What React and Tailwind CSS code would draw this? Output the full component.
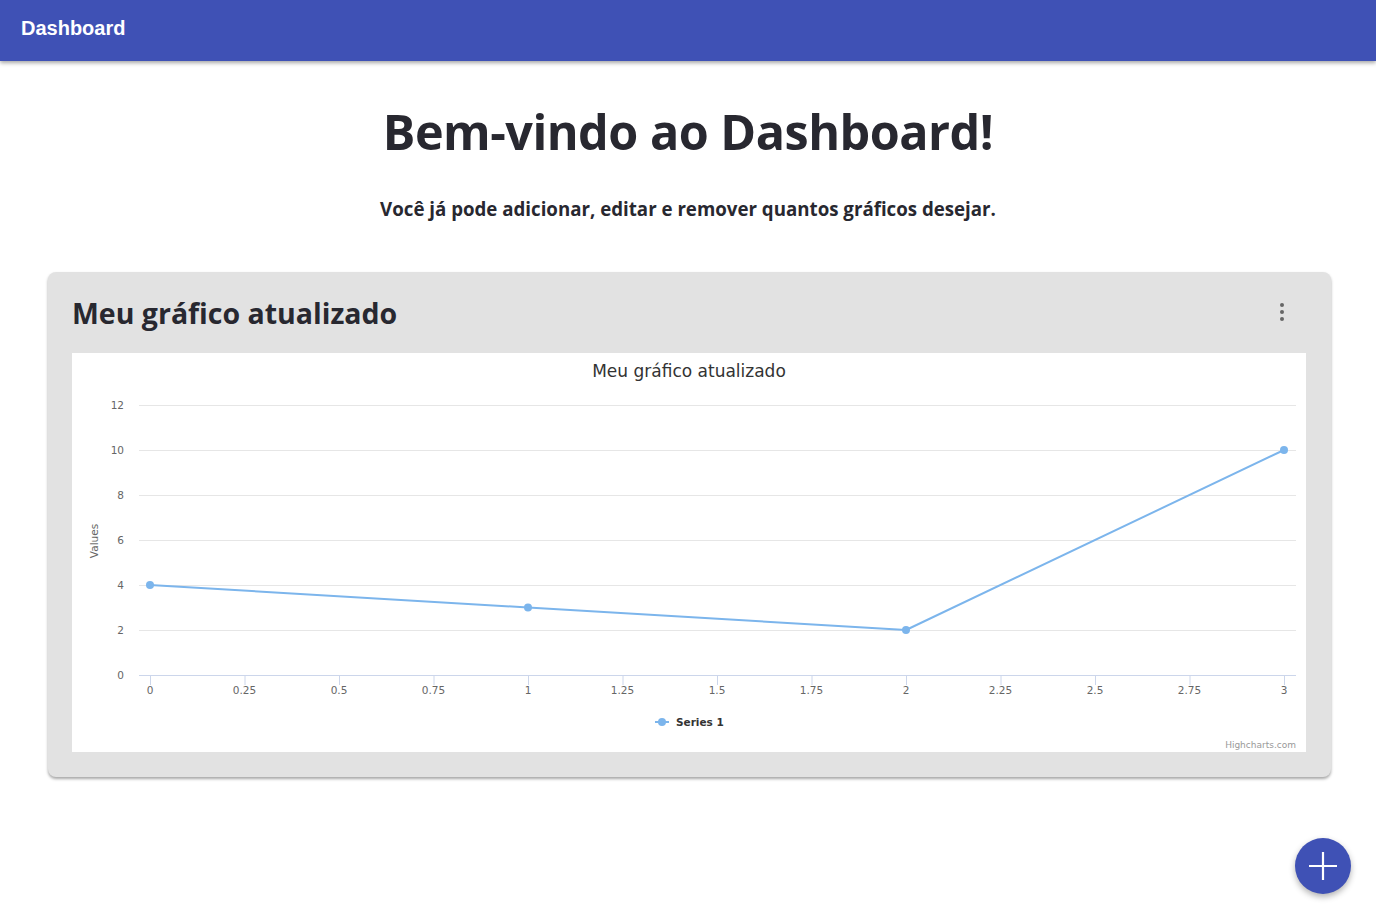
import React from 'react';

const series = [4, 3, 2, 10];
const plotLeft = 67;
const plotRight = 1224;
const yZero = 322;
const yStep = 22.5;
const xZero = 78;
const xUnit = 378;

const px = (i) => xZero + i * xUnit;
const py = (v) => yZero - v * yStep;

const xTicks = ['0', '0.25', '0.5', '0.75', '1', '1.25', '1.5', '1.75', '2', '2.25', '2.5', '2.75', '3'];
const yTicks = [0, 2, 4, 6, 8, 10, 12];

const chartFont = '"DejaVu Sans", Verdana, sans-serif';

const LineChart = ({ title }) => {
  const points = series.map((v, i) => `${px(i)},${py(v)}`).join(' ');
  return (
    <svg width="1234" height="399" viewBox="0 0 1234 399" className="block bg-white">
      <text x="617" y="24" textAnchor="middle" fontSize="17" fill="#333333" fontFamily={chartFont}>
        {title}
      </text>
      {yTicks.map((t) => (
        <g key={t}>
          {t !== 0 && (
            <line x1={plotLeft} x2={plotRight} y1={py(t) + 0.5} y2={py(t) + 0.5} stroke="#e6e6e6" strokeWidth="1" />
          )}
          <text x="52" y={py(t) + 4} textAnchor="end" fontSize="10.5" fill="#666666" fontFamily={chartFont}>
            {t}
          </text>
        </g>
      ))}
      <text
        x="0"
        y="0"
        transform="translate(26 188) rotate(-90)"
        textAnchor="middle"
        fontSize="10.5"
        fill="#666666"
        fontFamily={chartFont}
      >
        Values
      </text>
      <line x1={plotLeft} x2={plotRight} y1={yZero + 0.5} y2={yZero + 0.5} stroke="#ccd6eb" strokeWidth="1" />
      {xTicks.map((t, i) => {
        const x = xZero + i * (xUnit / 4);
        return (
          <g key={t}>
            <line x1={x + 0.5} x2={x + 0.5} y1={yZero} y2={yZero + 10} stroke="#ccd6eb" strokeWidth="1" />
            <text x={x} y={yZero + 19} textAnchor="middle" fontSize="10.5" fill="#666666" fontFamily={chartFont}>
              {t}
            </text>
          </g>
        );
      })}
      <polyline points={points} fill="none" stroke="#7cb5ec" strokeWidth="2" strokeLinejoin="round" />
      {series.map((v, i) => (
        <circle key={i} cx={px(i)} cy={py(v)} r="4" fill="#7cb5ec" />
      ))}
      <line x1="583" x2="597" y1="369" y2="369" stroke="#7cb5ec" strokeWidth="2" />
      <circle cx="590" cy="369" r="4" fill="#7cb5ec" />
      <text x="604" y="373" fontSize="10.5" fontWeight="bold" fill="#333333" fontFamily={chartFont}>
        Series 1
      </text>
      <text x="1224" y="395" textAnchor="end" fontSize="9" fill="#999999" fontFamily={chartFont}>
        Highcharts.com
      </text>
    </svg>
  );
};

const MoreIcon = () => (
  <svg width="6" height="20" viewBox="0 0 6 20" className="block">
    <circle cx="3" cy="3" r="2" fill="#666666" />
    <circle cx="3" cy="10" r="2" fill="#666666" />
    <circle cx="3" cy="17" r="2" fill="#666666" />
  </svg>
);

const ChartCard = ({ title }) => (
  <div className="ml-[48px] w-[1283px] rounded-lg bg-[#e2e2e2] pl-6 pr-[25px] pt-[24px] pb-[25px] shadow-[0_2px_3px_rgba(0,0,0,0.35)]">
    <div className="flex h-[57px] items-start justify-between">
      <h2 className="text-[28.5px] font-bold leading-[34px] text-[#282830]">{title}</h2>
      <button className="mr-[17px] mt-[2px] p-1">
        <MoreIcon />
      </button>
    </div>
    <LineChart title={title} />
  </div>
);

export default function App() {
  return (
    <div className="relative min-h-[914px] bg-white" style={{ fontFamily: '"Open Sans", "Noto Sans", sans-serif' }}>
      <header className="flex h-[61px] items-start bg-[#3f51b5] px-[21px] pt-[15px] shadow-[0_2px_4px_rgba(0,0,0,0.35)]">
        <span className="text-[20px] font-bold leading-[26px] text-white" style={{ fontFamily: '"Liberation Sans", Arial, sans-serif' }}>
          Dashboard
        </span>
      </header>
      <main>
        <h1 className="mt-[38px] text-center text-[48.5px] font-bold leading-[64px] tracking-[-0.5px] text-[#282830]">
          Bem-vindo ao Dashboard!
        </h1>
        <p className="mt-[33px] text-center text-[18.7px] font-bold leading-[26px] text-[#282830]">
          Você já pode adicionar, editar e remover quantos gráficos desejar.
        </p>
        <div className="mt-[50px]">
          <ChartCard title="Meu gráfico atualizado" />
        </div>
      </main>
      <button className="absolute left-[1295px] top-[838px] flex h-[56px] w-[56px] items-center justify-center rounded-full bg-[#3f51b5] shadow-[0_3px_6px_rgba(0,0,0,0.3)]">
        <svg width="32" height="32" viewBox="0 0 32 32">
          <path d="M16 2v28M2 16h28" stroke="white" strokeWidth="2.2" />
        </svg>
      </button>
    </div>
  );
}
